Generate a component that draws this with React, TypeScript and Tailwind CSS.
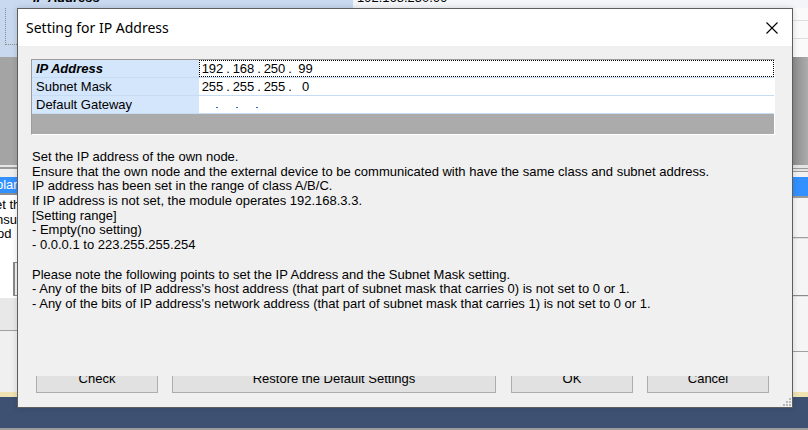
const SANS = "font-['Liberation_Sans',Arial,sans-serif]";

function IpField({ parts }: { parts: string[] }) {
  return (
    <div className="flex items-center h-full">
      {parts.map((p, i) => (
        <div key={i} className="flex">
          <span className="w-[25px] text-center">{p}</span>
          {i < parts.length - 1 && <span className="w-[6px] text-center">.</span>}
        </div>
      ))}
    </div>
  );
}

function ClippedButton({ label, width }: { label: string; width: string }) {
  return (
    <div className={`${width} h-[17px] overflow-hidden`}>
      <div className="h-[28px] -mt-[11px] bg-[#e1e1e1] border border-[#adadad] flex items-center justify-center text-black">
        {label}
      </div>
    </div>
  );
}

const helpLines = [
  'Set the IP address of the own node.',
  'Ensure that the own node and the external device to be communicated with have the same class and subnet address.',
  'IP address has been set in the range of class A/B/C.',
  'If IP address is not set, the module operates 192.168.3.3.',
  '[Setting range]',
  '- Empty(no setting)',
  '- 0.0.0.1 to 223.255.255.254',
  '',
  'Please note the following points to set the IP Address and the Subnet Mask setting.',
  "- Any of the bits of IP address's host address (that part of subnet mask that carries 0) is not set to 0 or 1.",
  "- Any of the bits of IP address's network address (that part of subnet mask that carries 1) is not set to 0 or 1.",
];

export default function App() {
  return (
    <div className={`relative w-[808px] h-[430px] overflow-hidden bg-[#f0f0f0] text-[13px] ${SANS}`}>
      {/* Background application behind the dialog */}
      <div className="flex flex-col h-full">
        <div className="h-[8px] flex overflow-hidden">
          <div className="w-[353px] bg-[#c8d9f0] pl-[33px]">
            <div className="-mt-[12px] font-bold italic text-black">IP Address</div>
          </div>
          <div className="flex-1 bg-[#f3f5f8] pl-[4px]">
            <div className="-mt-[12px] text-black">192.168.250.99</div>
          </div>
        </div>
        <div className="flex-1 flex">
          {/* left strip */}
          <div className="w-[17px] flex flex-col overflow-hidden">
            <div className="h-[49px] bg-[#c8d8ee] relative">
              <div className="ml-[5px] w-[12px] h-[37px] border-l border-b border-dotted border-[#8a8a8a]" />
            </div>
            <div className="h-[108px] bg-[#a4a4a4]" />
            <div className="h-[2px] bg-[#e6e6e6]" />
            <div className="h-[2px] bg-[#9a9a9a]" />
            <div className="h-[8px] bg-[#eeeeee]" />
            <div className="h-[16px] bg-[#3390ff] text-white whitespace-nowrap -indent-[4px] leading-[16px]">plan</div>
            <div className="h-[2px] bg-[#8f8f8f]" />
            <div className="h-[63px] bg-white whitespace-nowrap leading-[14.7px] pt-[3px] text-black">
              <div className="-ml-[5px]">et the</div>
              <div className="-ml-[4px]">nsure</div>
              <div className="-ml-[3px]">od</div>
            </div>
            <div className="h-[40px] bg-white">
              <div className="ml-[13px] mt-[4px] h-[34px] border-l-2 border-t border-b border-[#8a8a8a] bg-[#f4f4f4]" />
            </div>
            <div className="h-[32px] bg-[#e8e8e8]" />
            <div className="h-[1px] bg-[#a0a0a0]" />
            <div className="flex-1 bg-[#f0f0f0]" />
            <div className="h-[5px] bg-[#f1e2b2]" />
            <div className="h-[31px] bg-[#3e5173]" />
            <div className="h-[2px] bg-[#9c9c9c]" />
          </div>
          {/* middle, mostly hidden */}
          <div className="flex-1 flex flex-col">
            <div className="flex-1 bg-[#f0f0f0]" />
            <div className="h-[5px] bg-[#f1e2b2]" />
            <div className="h-[31px] bg-[#3e5173]" />
            <div className="h-[2px] bg-[#9c9c9c]" />
          </div>
          {/* right strip */}
          <div className="w-[15px] flex flex-col">
            <div className="h-[12px] bg-[#fafafa]" />
            <div className="h-[1px] bg-[#dedede]" />
            <div className="h-[17px] bg-[#fafafa]" />
            <div className="h-[1px] bg-[#dedede]" />
            <div className="h-[18px] bg-[#fafafa]" />
            <div className="h-[108px] bg-gradient-to-r from-[#8c8c8c] to-[#acacac]" />
            <div className="h-[3px] bg-[#e4e4e4]" />
            <div className="h-[1px] bg-[#9a9a9a]" />
            <div className="h-[2px] bg-[#e4e4e4]" />
            <div className="h-[1px] bg-[#9a9a9a]" />
            <div className="h-[5px] bg-[#f0f0f0]" />
            <div className="h-[19px] bg-[#3390ff]" />
            <div className="h-[2px] bg-[#9a9a9a]" />
            <div className="h-[39px] bg-[#f5f5f5]" />
            <div className="h-[1px] bg-[#a0a0a0]" />
            <div className="h-[1px] bg-[#e0e0e0]" />
            <div className="h-[56px] bg-[#f5f5f5]" />
            <div className="h-[1px] bg-[#8a8a8a]" />
            <div className="h-[1px] bg-[#e0e0e0]" />
            <div className="h-[54px] bg-[#f5f5f5]" />
            <div className="h-[1px] bg-[#a0a0a0]" />
            <div className="flex-1 bg-[#f5f5f5]" />
            <div className="h-[5px] bg-[#f1e2b2]" />
            <div className="h-[31px] bg-[#3e5173]" />
            <div className="h-[2px] bg-[#9c9c9c]" />
          </div>
        </div>
      </div>

      {/* Dialog */}
      <div className="absolute left-[17px] top-[8px] w-[776px] h-[400px] border border-[#5e5e5e] bg-[#f0f0f0] flex flex-col shadow-[0_0_6px_rgba(0,0,0,0.15)]">
        <div className="h-[37px] bg-white flex items-center justify-between pl-[8px] pr-[14px]">
          <span className="font-['Noto_Sans',sans-serif] text-[14px] text-black">Setting for IP Address</span>
          <svg width="12" height="12" viewBox="0 0 12 12" className="block">
            <path d="M0.5 0.5 L11.5 11.5 M11.5 0.5 L0.5 11.5" stroke="#000" strokeWidth="1.1" fill="none" />
          </svg>
        </div>

        <div className="flex-1 flex flex-col">
          {/* grid */}
          <div className="mt-[13px] ml-[13px] w-[744px] h-[76px] border-t border-l border-[#9c9c9c] border-b border-r border-b-white border-r-white bg-[#ababab] flex flex-col">
            <div className="h-[18px] flex border-b border-[#c6dcf5] bg-white">
              <div className="w-[167px] bg-[#d4e6fb] pl-[4px] font-bold italic text-black leading-[18px]">IP Address</div>
              <div className="flex-1 border border-dotted border-black text-black">
                <IpField parts={['192', '168', '250', '99']} />
              </div>
            </div>
            <div className="h-[18px] flex border-b border-[#c6dcf5] bg-white">
              <div className="w-[167px] bg-[#d4e6fb] pl-[4px] text-black leading-[17px]">Subnet Mask</div>
              <div className="flex-1 pl-[1px] text-black">
                <IpField parts={['255', '255', '255', '0']} />
              </div>
            </div>
            <div className="h-[18px] flex border-b border-[#c6dcf5] bg-white">
              <div className="w-[167px] bg-[#d4e6fb] pl-[4px] text-black leading-[17px]">Default Gateway</div>
              <div className="flex-1 relative">
                <div className="flex gap-[18px] pl-[17px] pt-[11px]">
                  <span className="w-[2px] h-[1px] bg-[#3a5fd6]" />
                  <span className="w-[2px] h-[1px] bg-[#3a5fd6]" />
                  <span className="w-[2px] h-[1px] bg-[#3a5fd6]" />
                </div>
              </div>
            </div>
            <div className="flex-1" />
          </div>

          {/* help text */}
          <div className="mt-[15px] ml-[14px] leading-[14.7px] text-black whitespace-nowrap">
            {helpLines.map((l, i) => (
              <div key={i} className="h-[14.7px]">{l}</div>
            ))}
          </div>

          {/* buttons (top part hidden by overlap) */}
          <div className="mt-auto mb-[14px] ml-[18px] flex">
            <ClippedButton label="Check" width="w-[122px]" />
            <div className="w-[14px]" />
            <ClippedButton label="Restore the Default Settings" width="w-[324px]" />
            <div className="w-[15px]" />
            <ClippedButton label="OK" width="w-[122px]" />
            <div className="w-[14px]" />
            <ClippedButton label="Cancel" width="w-[122px]" />
          </div>
        </div>

        {/* resize grip */}
        <div className="absolute right-[1px] bottom-[1px] grid grid-cols-3 gap-[1px]">
          <span className="w-[2px] h-[2px]" />
          <span className="w-[2px] h-[2px]" />
          <span className="w-[2px] h-[2px] bg-[#b8b8b8]" />
          <span className="w-[2px] h-[2px]" />
          <span className="w-[2px] h-[2px] bg-[#b8b8b8]" />
          <span className="w-[2px] h-[2px] bg-[#b8b8b8]" />
          <span className="w-[2px] h-[2px] bg-[#b8b8b8]" />
          <span className="w-[2px] h-[2px] bg-[#b8b8b8]" />
          <span className="w-[2px] h-[2px] bg-[#b8b8b8]" />
        </div>
      </div>
    </div>
  );
}
